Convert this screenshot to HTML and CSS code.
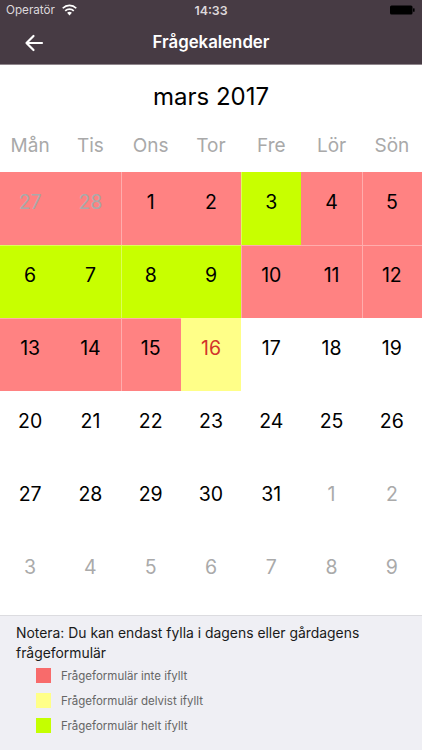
FILE: index.html
```html
<!DOCTYPE html>
<html lang="sv">
<head>
<meta charset="utf-8">
<title>Frågekalender</title>
<link rel="stylesheet" href="styles.css">
</head>
<body>
<div class="app">
  <header class="header">
    <div class="statusbar">
      <div class="sb-left">
        <span class="carrier">Operatör</span>
        <svg class="wifi" width="17" height="12" viewBox="0 0 15 11">
          <path d="M7.5 10.5 L5.3 8.1 A3.2 3.2 0 0 1 9.7 8.1 Z" fill="#fff"/>
          <path d="M3.6 6.3 A5.6 5.6 0 0 1 11.4 6.3" fill="none" stroke="#fff" stroke-width="1.6"/>
          <path d="M1.3 3.9 A8.8 8.8 0 0 1 13.7 3.9" fill="none" stroke="#fff" stroke-width="1.6"/>
        </svg>
      </div>
      <div class="time">14:33</div>
      <div class="sb-right">
        <svg class="battery" width="25" height="10" viewBox="0 0 25 10">
          <rect x="0" y="0.5" width="22.5" height="9" rx="1.5" fill="#000"/>
          <rect x="23" y="3.2" width="1.6" height="3.6" rx="0.6" fill="#000"/>
        </svg>
      </div>
    </div>
    <nav class="navbar">
      <svg class="back" width="20" height="18" viewBox="0 0 20 18">
        <path d="M18 9 H2.5 M9.5 2 L2.5 9 L9.5 16" fill="none" stroke="#fff" stroke-width="2.2" stroke-linecap="round" stroke-linejoin="round"/>
      </svg>
      <h1 class="nav-title">Frågekalender</h1>
    </nav>
  </header>

  <main class="calendar">
    <div class="month">mars 2017</div>
    <div class="weekdays">
      <span>Mån</span><span>Tis</span><span>Ons</span><span>Tor</span><span>Fre</span><span>Lör</span><span>Sön</span>
    </div>
    <div class="grid">
      <div class="cell red other">27</div>
      <div class="cell red other">28</div>
      <div class="cell red seam-l">1</div>
      <div class="cell red">2</div>
      <div class="cell green seam-l">3</div>
      <div class="cell red">4</div>
      <div class="cell red seam-l">5</div>

      <div class="cell green seam-t">6</div>
      <div class="cell green seam-t">7</div>
      <div class="cell green seam-t seam-l">8</div>
      <div class="cell green seam-t">9</div>
      <div class="cell red seam-t seam-l">10</div>
      <div class="cell red seam-t">11</div>
      <div class="cell red seam-t seam-l">12</div>

      <div class="cell red seam-t">13</div>
      <div class="cell red seam-t">14</div>
      <div class="cell red seam-t seam-l">15</div>
      <div class="cell yellow today">16</div>
      <div class="cell">17</div>
      <div class="cell">18</div>
      <div class="cell">19</div>

      <div class="cell">20</div>
      <div class="cell">21</div>
      <div class="cell">22</div>
      <div class="cell">23</div>
      <div class="cell">24</div>
      <div class="cell">25</div>
      <div class="cell">26</div>

      <div class="cell">27</div>
      <div class="cell">28</div>
      <div class="cell">29</div>
      <div class="cell">30</div>
      <div class="cell">31</div>
      <div class="cell other">1</div>
      <div class="cell other">2</div>

      <div class="cell other">3</div>
      <div class="cell other">4</div>
      <div class="cell other">5</div>
      <div class="cell other">6</div>
      <div class="cell other">7</div>
      <div class="cell other">8</div>
      <div class="cell other">9</div>
    </div>
  </main>

  <footer class="legend">
    <p class="note">Notera: Du kan endast fylla i dagens eller gårdagens frågeformulär</p>
    <ul class="legend-list">
      <li><span class="swatch sw-red"></span>Frågeformulär inte ifyllt</li>
      <li><span class="swatch sw-yellow"></span>Frågeformulär delvist ifyllt</li>
      <li><span class="swatch sw-green"></span>Frågeformulär helt ifyllt</li>
    </ul>
  </footer>
</div>
</body>
</html>
```

FILE: styles.css
```css
* { box-sizing: border-box; }

html, body {
  margin: 0;
  padding: 0;
  background: #fff;
}

body {
  font-family: Inter, "Noto Sans", "Liberation Sans", sans-serif;
  color: #000;
}

.app {
  width: 422px;
  height: 750px;
  display: flex;
  flex-direction: column;
  overflow: hidden;
}

/* Header */
.header {
  background: #473b44;
  border-bottom: 1px solid #8f868c;
}

.statusbar {
  height: 20px;
  display: flex;
  align-items: center;
  justify-content: space-between;
  padding: 0 7px 0 6px;
  color: #ddd8db;
  font-size: 11.7px;
  position: relative;
}

.sb-left {
  display: flex;
  align-items: center;
  gap: 6px;
}

.time {
  position: absolute;
  left: 0;
  right: 0;
  text-align: center;
  font-weight: 600;
  font-size: 12.4px;
}

.sb-right {
  display: flex;
  align-items: center;
}

.navbar {
  height: 44px;
  position: relative;
  display: flex;
  align-items: center;
  justify-content: center;
}

.back {
  position: absolute;
  left: 24px;
  top: 14px;
}

.nav-title {
  margin: 0;
  font-size: 16.8px;
  font-weight: 600;
  color: #fff;
}

/* Calendar */
.calendar {
  flex: none;
}

.month {
  height: 64px;
  line-height: 64px;
  text-align: center;
  font-size: 24px;
  color: #000;
}

.weekdays {
  display: grid;
  grid-template-columns: repeat(7, 1fr);
  height: 43px;
  padding-bottom: 9px;
  line-height: 34px;
  text-align: center;
  font-size: 19px;
  color: #a9a9a9;
}

.grid {
  display: grid;
  grid-template-columns: repeat(7, 1fr);
  grid-auto-rows: 73px;
}

.cell {
  text-align: center;
  font-size: 19.5px;
  line-height: 22px;
  padding-top: 19px;
  color: #000;
}

.cell.red { background: #ff8282; }
.cell.green { background: #c8ff00; }
.cell.yellow { background: #ffff88; }
.cell.other { color: #aaaaaa; }
.cell.today { color: #d2342c; }

.cell.seam-l { box-shadow: inset 1px 0 0 rgba(255, 255, 255, 0.35); }
.cell.seam-t { box-shadow: inset 0 1px 0 rgba(255, 255, 255, 0.35); }
.cell.seam-t.seam-l { box-shadow: inset 1px 1px 0 rgba(255, 255, 255, 0.35); }

/* Legend */
.legend {
  margin-top: 5px;
  flex: 1;
  background: #efeff4;
  border-top: 1px solid #dcdce0;
  padding: 7px 16px 0;
}

.note {
  margin: 0;
  font-size: 13.9px;
  line-height: 20px;
  color: #1a1a1a;
}

.legend-list {
  list-style: none;
  margin: 0;
  padding: 0 0 0 20px;
}

.legend-list li {
  height: 25px;
  display: flex;
  align-items: center;
  gap: 10px;
  font-size: 11.5px;
  color: #666;
}

.swatch {
  width: 15px;
  height: 15px;
  flex: none;
}

.sw-red { background: #f86b6b; }
.sw-yellow { background: #ffff88; }
.sw-green { background: #c4ff00; }
```
